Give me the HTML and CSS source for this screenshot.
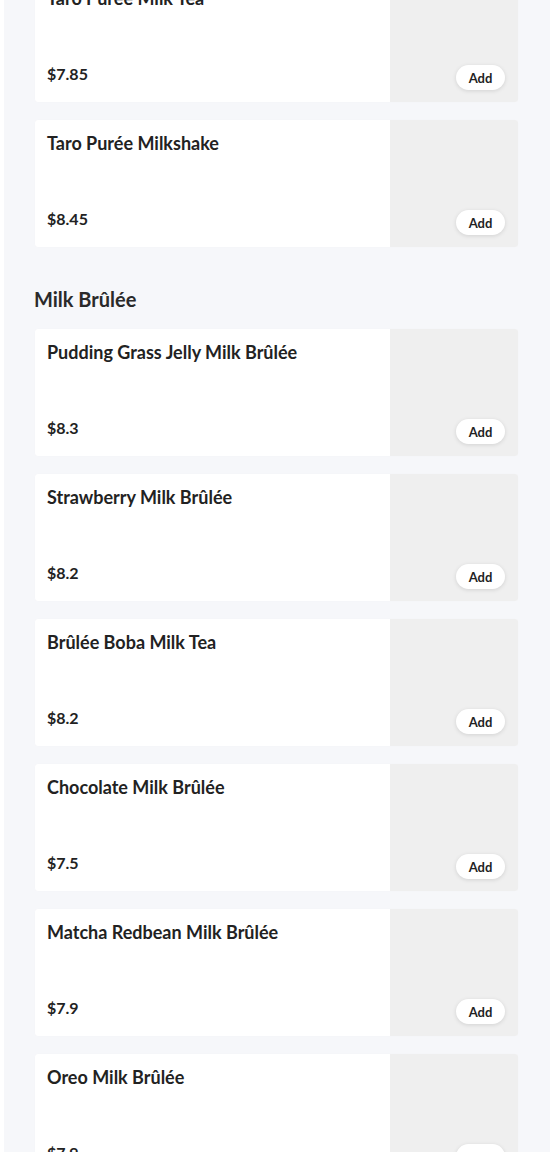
FILE: index.html
```html
<!DOCTYPE html>
<html lang="en">
<head>
    <meta charset="UTF-8">
    <meta name="viewport" content="width=device-width, initial-scale=1.0">
    <title>Menu</title>
    <link rel="stylesheet" href="styles.css">
</head>
<body>
<div class="menu">
    <!-- Taro (scrolled past the heading) -->
    <section class="category category-scrolled">
        <div class="item">
            <div class="item-info">
                <div class="item-name">Taro Purée Milk Tea</div>
                <div class="item-price">$7.85</div>
            </div>
            <div class="item-image"><button class="btn-add">Add</button></div>
        </div>
        <div class="item">
            <div class="item-info">
                <div class="item-name">Taro Purée Milkshake</div>
                <div class="item-price">$8.45</div>
            </div>
            <div class="item-image"><button class="btn-add">Add</button></div>
        </div>
    </section>

    <!-- Milk Brulee -->
    <section class="category">
        <h2>Milk Brûlée</h2>
        <div class="item">
            <div class="item-info">
                <div class="item-name">Pudding Grass Jelly Milk Brûlée</div>
                <div class="item-price">$8.3</div>
            </div>
            <div class="item-image"><button class="btn-add">Add</button></div>
        </div>
        <div class="item">
            <div class="item-info">
                <div class="item-name">Strawberry Milk Brûlée</div>
                <div class="item-price">$8.2</div>
            </div>
            <div class="item-image"><button class="btn-add">Add</button></div>
        </div>
        <div class="item">
            <div class="item-info">
                <div class="item-name">Brûlée Boba Milk Tea</div>
                <div class="item-price">$8.2</div>
            </div>
            <div class="item-image"><button class="btn-add">Add</button></div>
        </div>
        <div class="item">
            <div class="item-info">
                <div class="item-name">Chocolate Milk Brûlée</div>
                <div class="item-price">$7.5</div>
            </div>
            <div class="item-image"><button class="btn-add">Add</button></div>
        </div>
        <div class="item">
            <div class="item-info">
                <div class="item-name">Matcha Redbean Milk Brûlée</div>
                <div class="item-price">$7.9</div>
            </div>
            <div class="item-image"><button class="btn-add">Add</button></div>
        </div>
        <div class="item">
            <div class="item-info">
                <div class="item-name">Oreo Milk Brûlée</div>
                <div class="item-price">$7.9</div>
            </div>
            <div class="item-image"><button class="btn-add">Add</button></div>
        </div>
    </section>
</div>
</body>
</html>
```

FILE: styles.css
```css
body {
    margin: 0;
    background-color: #ffffff;
    font-family: Lato, "Open Sans", Arial, sans-serif;
    color: #222222;
    overflow: hidden;
}
.menu {
    margin-left: 4px;
    padding-left: 31px;
    min-height: 1152px;
    background-color: #f6f7fa;
}
/* page is scrolled a little into the first list */
.category-scrolled {
    margin-top: -25px;
}
.category + .category {
    margin-top: 40px;
}
.category h2 {
    margin: 0 0 18px -1px;
    font-size: 20px;
    line-height: 24px;
    font-weight: 700;
    color: #2a2a2a;
}
.item {
    display: flex;
    width: 483px;
    height: 127px;
    margin-bottom: 18px;
    background-color: #ffffff;
    border-radius: 3px;
    overflow: hidden;
    box-shadow: 0 0 1px rgba(0, 0, 0, 0.04);
}
.item-info {
    flex: 1;
    display: flex;
    flex-direction: column;
    justify-content: space-between;
    padding: 12px 12px 18px 12px;
}
.item-name {
    font-size: 18px;
    line-height: 22px;
    font-weight: 700;
}
.item-price {
    font-size: 16px;
    line-height: 20px;
    font-weight: 700;
}
.item-image {
    width: 128px;
    display: flex;
    align-items: flex-end;
    justify-content: flex-end;
    padding: 0 13px 12px 0;
    box-sizing: border-box;
    background-color: #efefef;
}
.btn-add {
    width: 49px;
    height: 25px;
    padding: 0;
    border: none;
    border-radius: 13px;
    background-color: #ffffff;
    box-shadow: 0 1px 4px rgba(0, 0, 0, 0.12);
    font-family: inherit;
    font-size: 13px;
    font-weight: 700;
    color: #222222;
    cursor: pointer;
}
```
